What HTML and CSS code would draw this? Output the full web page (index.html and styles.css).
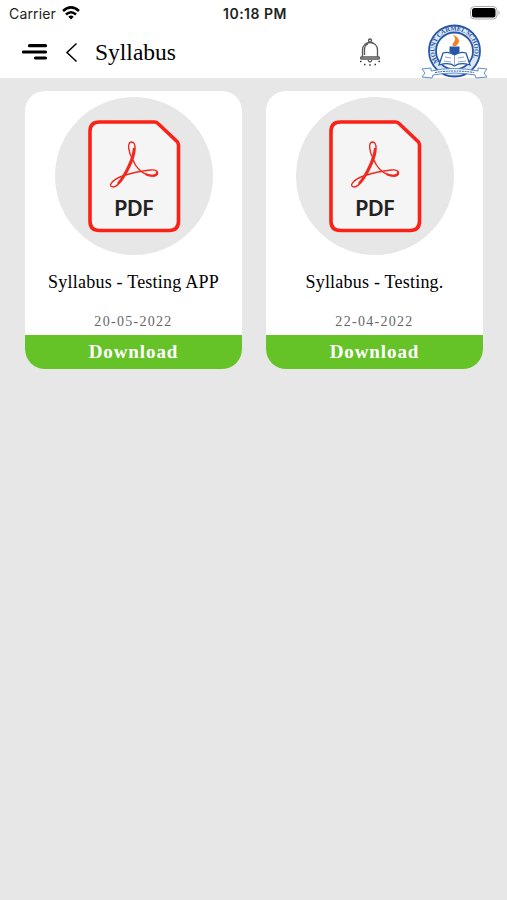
FILE: index.html
```
<!DOCTYPE html>
<html lang="en">
<head>
    <meta charset="UTF-8">
    <meta name="viewport" content="width=device-width, initial-scale=1.0">
    <title>Syllabus</title>
    <link rel="stylesheet" href="styles.css">
</head>
<body>

    <!-- Shared PDF page shape -->
    <svg class="symbols" width="0" height="0">
        <symbol id="pdf" viewBox="54.5 97 158 158">
            <path d="M99 122H154Q156 122 157.500 123.500L176.500 141.500Q178 143 178 145V221Q178 230.500 168.500 230.500H99Q89.500 230.500 89.500 221V131.500Q89.500 122 99 122Z" fill="#f5f5f5" stroke="#fa2116" stroke-width="3.600" stroke-linejoin="round"/>
            <g fill="none" stroke="#f02a20" stroke-linecap="round" stroke-linejoin="round">
                <path d="M132.500 160C127.500 152 126.500 142.500 131 142C136 142 135.500 152 131 163C126 175 118 187 112.500 187C107 186.500 111 180 122 176C132 172.500 145 170.500 150 170C155 169.500 157.500 171 157 173.500C156 178 145 176 138.500 169.500C135 166 133.500 163 132.500 160Z" stroke-width="1.400"/>
                <path d="M133.500 149C133 157 125 175 118 183" stroke-width="2.500"/>
                <path d="M146 174.500C152 177 157 175 156.500 172.500" stroke-width="2.200"/>
            </g>
        </symbol>
    </svg>

    <header class="header">
        <div class="status-bar">
            <div class="carrier">
                <span>Carrier</span>
                <svg class="wifi" width="18" height="14" viewBox="0 0 18 14">
                    <g fill="none" stroke="#000" stroke-width="2.600">
                        <path d="M1 5Q9-2.200 17 5"/>
                        <path d="M4 8.500Q9 4 14 8.500"/>
                    </g>
                    <path d="M6.300 10.700Q9 8.500 11.700 10.700L9 13.500Z"/>
                </svg>
            </div>
            <div class="time">10:18 PM</div>
            <svg class="battery" width="31" height="14" viewBox="0 0 31 14">
                <rect x=".5" y=".5" width="26.500" height="12.500" rx="4" fill="#fff" stroke="#aaa"/>
                <rect x="2" y="2" width="23.500" height="9.500" rx="2.500"/>
                <path d="M28.500 4.500Q31 6.700 28.500 9Z" fill="#aaa"/>
            </svg>
        </div>

        <div class="nav-bar">
            <svg class="menu" width="26" height="18" viewBox="0 0 26 18">
                <path d="M7.500 2.700H23.500M1.500 9H23.500M13.500 15H23.500" stroke="#000" stroke-width="3.200" stroke-linecap="round"/>
            </svg>
            <svg class="back" width="13" height="21" viewBox="0 0 13 21">
                <path d="M11.500 1.500L2 10.500L11.500 19.500" fill="none" stroke="#000" stroke-width="1.500"/>
            </svg>
            <h1 class="title">Syllabus</h1>
            <svg class="bell" width="24" height="30" viewBox="0 0 24 30">
                <g fill="none" stroke="#555" stroke-width="1.300">
                    <circle cx="12" cy="3.500" r="1.500"/>
                    <path d="M4.500 20V13C4.500 3 19.500 3 19.500 13V20M6.500 18V13Q6.500 8 10 7"/>
                    <rect x="2.500" y="20" width="19" height="2" rx="1"/>
                    <path d="M10 23Q12 27 14 23"/>
                </g>
                <path d="M2 24.500h1.500M6 27.500h1.500M11.200 28h1.500M16.500 27.500h1.500M20.500 24.500h1.500" stroke="#333" stroke-width="1.300"/>
            </svg>
            <svg class="logo" width="70" height="58" viewBox="420 22 70 58">
                <circle cx="454.500" cy="51" r="25.500" fill="#dce7f5" stroke="#2756a5" stroke-width="1.800"/>
                <circle cx="454.500" cy="51" r="18.500" fill="#fff" stroke="#2756a5" stroke-width="1.800"/>
                <path id="ring" d="M438.500 62A19.800 19.800 0 1 1 470.500 62" fill="none"/>
                <text class="logo-name"><textPath href="#ring" textLength="82">MOUNT CARMEL SCHOOL</textPath></text>
                <path d="M453 46C451 42 459 41 452.500 34.500C461 38 460 43 456 46Z" fill="#f58220"/>
                <path d="M449.500 46.500H459.500V52Q454.500 57 449.500 52Z" fill="#2756a5"/>
                <path d="M443 53Q449 51 454.500 55Q460 51 466 53L470 65Q460 62 454.500 66Q449 62 439 65Z" fill="#fff" stroke="#2756a5" stroke-width="1.300"/>
                <path d="M454.500 55V66M445 57L451 58M444 61L451 62M458 58L464 57M458 62L466 61" stroke="#6f91c6" stroke-width=".8"/>
                <path d="M422 69L431 68V71Q454 66 478 71V68L487 69L484 73L487 77L476 78L475 75Q454 71 433 75L432 78L422 77L425 73Z" fill="#fff" stroke="#5e8fca"/>
                <path d="M435 72.500Q454 69.500 474 72.500" fill="none" stroke="#2756a5" stroke-dasharray="2 .7"/>
            </svg>
        </div>
    </header>

    <main class="cards">
        <div class="card">
            <div class="circle">
                <svg width="158" height="158">
                    <use href="#pdf"/>
                    <text class="pdf-label" x="78.500" y="119">PDF</text>
                </svg>
            </div>
            <h2 class="name">Syllabus - Testing APP</h2>
            <p class="date">20-05-2022</p>
            <button class="download">Download</button>
        </div>
        <div class="card">
            <div class="circle">
                <svg width="158" height="158">
                    <use href="#pdf"/>
                    <text class="pdf-label" x="78.500" y="119">PDF</text>
                </svg>
            </div>
            <h2 class="name">Syllabus - Testing.</h2>
            <p class="date">22-04-2022</p>
            <button class="download">Download</button>
        </div>
    </main>

</body>
</html>
```

FILE: styles.css
```
* {
    box-sizing: border-box;
}

body {
    font-family: 'Liberation Serif', serif;
    margin: 0;
    background-color: #e7e7e7;
}

svg {
    display: block;
    flex-shrink: 0;
}

.symbols {
    position: absolute;
}

.header {
    height: 78px;
    background-color: #fff;
}

.status-bar {
    display: grid;
    grid-template-columns: 1fr auto 1fr;
    align-items: center;
    height: 26px;
    padding: 0 6px 0 9px;
    font-family: Inter, sans-serif;
    font-size: 14px;
    color: #222;
}

.carrier {
    display: flex;
    align-items: center;
    gap: 6px;
    letter-spacing: 0.15px;
}

.time {
    padding-top: 1px;
    font-weight: 600;
    font-size: 14px;
    letter-spacing: 0.5px;
}

.battery {
    justify-self: end;
}

.nav-bar {
    display: flex;
    align-items: center;
    height: 52px;
    padding-left: 22px;
}

.back {
    margin-left: 17px;
}

.title {
    width: 263px;
    margin: 0 0 0 17px;
    font-size: 23.5px;
    font-weight: normal;
}

.logo {
    align-self: flex-start;
    margin: -4px 0 0 38px;
}

.logo-name {
    font-size: 6.5px;
    font-weight: bold;
    fill: #2756a5;
}

.cards {
    display: grid;
    grid-template-columns: 217px 217px;
    gap: 24px;
    padding: 13px 25px;
}

.card {
    display: flex;
    flex-direction: column;
    align-items: center;
    height: 278px;
    padding-top: 6px;
    border-radius: 20px;
    background-color: #fff;
    overflow: hidden;
}

.circle {
    width: 158px;
    height: 158px;
    border-radius: 50%;
    background-color: #e7e7e7;
}

.pdf-label {
    font-family: 'Noto Sans', sans-serif;
    font-size: 22px;
    font-weight: 600;
    letter-spacing: -0.8px;
    text-anchor: middle;
    fill: #222;
}

.name {
    margin: 16px 0 0;
    font-size: 18px;
    line-height: 22px;
    font-weight: normal;
    letter-spacing: 0.22px;
}

.date {
    margin: 20px 0 0;
    font-size: 14px;
    line-height: 18px;
    letter-spacing: 1.3px;
    color: #666;
}

.download {
    width: 100%;
    height: 34px;
    margin-top: auto;
    padding: 0;
    border: none;
    background-color: #65c328;
    color: #fff;
    font-family: inherit;
    font-size: 19px;
    font-weight: bold;
    letter-spacing: 0.9px;
    cursor: pointer;
}
```
